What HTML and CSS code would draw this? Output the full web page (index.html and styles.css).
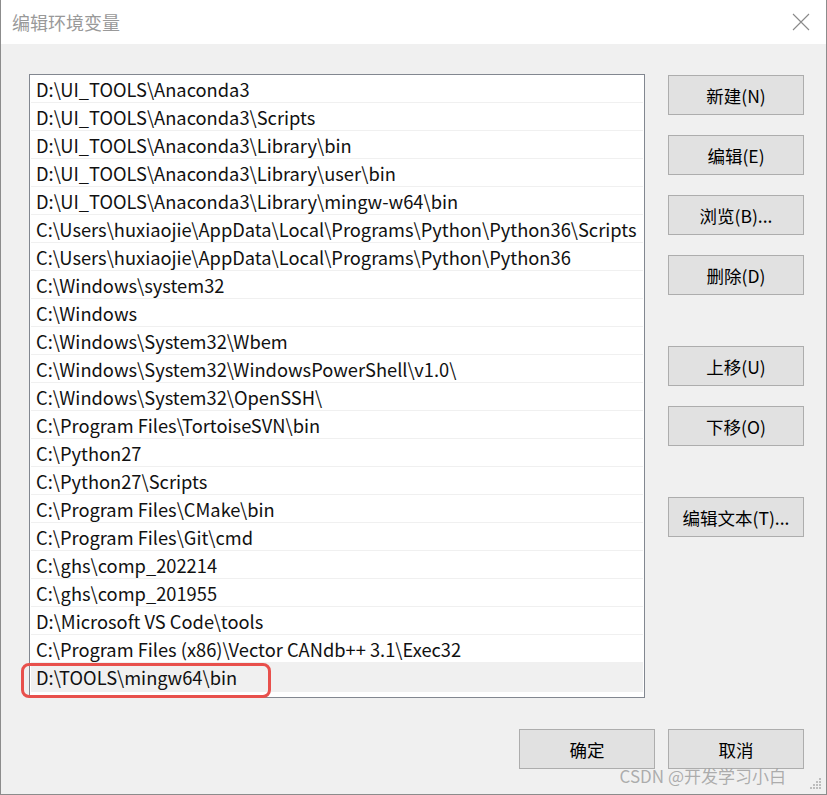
FILE: index.html
```html
<!DOCTYPE html>
<html lang="zh-CN">
<head>
<meta charset="utf-8">
<title>编辑环境变量</title>
<link rel="stylesheet" href="styles.css">
</head>
<body>
<div class="window">
  <div class="titlebar">
    <span class="title">编辑环境变量</span>
    <svg class="close" width="18" height="18" viewBox="0 0 18 18"><path d="M1 1 L17 17 M17 1 L1 17" stroke="#8a8a8a" stroke-width="1.1" fill="none"/></svg>
  </div>
  <div class="content">
    <div class="main">
      <div class="list">
        <div class="row">D:\UI_TOOLS\Anaconda3</div>
        <div class="row">D:\UI_TOOLS\Anaconda3\Scripts</div>
        <div class="row">D:\UI_TOOLS\Anaconda3\Library\bin</div>
        <div class="row">D:\UI_TOOLS\Anaconda3\Library\user\bin</div>
        <div class="row">D:\UI_TOOLS\Anaconda3\Library\mingw-w64\bin</div>
        <div class="row">C:\Users\huxiaojie\AppData\Local\Programs\Python\Python36\Scripts</div>
        <div class="row">C:\Users\huxiaojie\AppData\Local\Programs\Python\Python36</div>
        <div class="row">C:\Windows\system32</div>
        <div class="row">C:\Windows</div>
        <div class="row">C:\Windows\System32\Wbem</div>
        <div class="row">C:\Windows\System32\WindowsPowerShell\v1.0\</div>
        <div class="row">C:\Windows\System32\OpenSSH\</div>
        <div class="row">C:\Program Files\TortoiseSVN\bin</div>
        <div class="row">C:\Python27</div>
        <div class="row">C:\Python27\Scripts</div>
        <div class="row">C:\Program Files\CMake\bin</div>
        <div class="row">C:\Program Files\Git\cmd</div>
        <div class="row">C:\ghs\comp_202214</div>
        <div class="row">C:\ghs\comp_201955</div>
        <div class="row">D:\Microsoft VS Code\tools</div>
        <div class="row">C:\Program Files (x86)\Vector CANdb++ 3.1\Exec32</div>
        <div class="row selected">D:\TOOLS\mingw64\bin</div>
      </div>
      <div class="side">
        <div class="btn">新建(N)</div>
        <div class="btn gap-s">编辑(E)</div>
        <div class="btn gap-s">浏览(B)...</div>
        <div class="btn gap-s">删除(D)</div>
        <div class="btn gap-l">上移(U)</div>
        <div class="btn gap-s">下移(O)</div>
        <div class="btn gap-l">编辑文本(T)...</div>
      </div>
    </div>
    <div class="footer">
      <div class="btn">确定</div>
      <div class="btn">取消</div>
    </div>
  </div>
  <div class="highlight"></div>
  <div class="watermark">CSDN @开发学习小白</div>
  <svg class="grip" width="12" height="12" viewBox="0 0 12 12">
    <g fill="#bdbdbd">
      <rect x="9" y="0" width="2" height="2"/>
      <rect x="6" y="3" width="2" height="2"/><rect x="9" y="3" width="2" height="2"/>
      <rect x="3" y="6" width="2" height="2"/><rect x="6" y="6" width="2" height="2"/><rect x="9" y="6" width="2" height="2"/>
      <rect x="0" y="9" width="2" height="2"/><rect x="3" y="9" width="2" height="2"/><rect x="6" y="9" width="2" height="2"/><rect x="9" y="9" width="2" height="2"/>
    </g>
  </svg>
</div>
</body>
</html>
```
FILE: styles.css
```css
* { box-sizing: border-box; }
html, body { margin: 0; padding: 0; }
body {
  width: 827px;
  height: 795px;
  overflow: hidden;
  font-family: "Noto Sans CJK SC", "Noto Sans", sans-serif;
  color: #000;
  background: #fff;
}
.window {
  position: relative;
  width: 827px;
  height: 795px;
  border-left: 1px solid #8c8c8c;
  border-right: 1px solid #8c8c8c;
  border-bottom: 1px solid #8c8c8c;
  display: flex;
  flex-direction: column;
}
.titlebar {
  height: 44px;
  background: #fff;
  display: flex;
  align-items: center;
  justify-content: space-between;
  padding: 0 16px 0 11px;
}
.title {
  font-size: 18px;
  color: #999;
}
.close { display: block; }
.content {
  flex: 1;
  background: #f0f0f0;
  display: flex;
  flex-direction: column;
  padding: 30px 22px 0 28px;
}
.main {
  display: flex;
  align-items: flex-start;
  gap: 23px;
}
.list {
  width: 617px;
  height: 624px;
  background: #fff;
  border: 1px solid #828790;
  padding: 0 1px;
}
.row {
  height: 28px;
  line-height: 28px;
  font-size: 18.3px;
  padding-left: 5px;
  border-bottom: 1px solid #f0f0f0;
  white-space: nowrap;
  overflow: hidden;
  color: #111;
}
.row.selected {
  background: #f0f0f0;
  height: 29px;
  border-bottom: none;
}
.side {
  display: flex;
  flex-direction: column;
  padding-top: 1px;
}
.btn {
  width: 136px;
  height: 40px;
  background: #e1e1e1;
  border: 1px solid #adadad;
  display: flex;
  align-items: center;
  justify-content: center;
  font-size: 17.5px;
  color: #000;
}
.gap-s { margin-top: 20px; }
.gap-l { margin-top: 51px; }
.footer {
  display: flex;
  justify-content: flex-end;
  gap: 13px;
  margin-top: 31px;
}
.highlight {
  position: absolute;
  left: 20px;
  top: 663px;
  width: 250px;
  height: 35px;
  border: 3.5px solid #e8504c;
  border-radius: 8px;
}
.watermark {
  position: absolute;
  right: 40px;
  top: 763px;
  font-size: 17px;
  color: rgba(160,160,160,0.85);
  white-space: nowrap;
}
.grip {
  position: absolute;
  right: 4px;
  bottom: 4px;
}
```
